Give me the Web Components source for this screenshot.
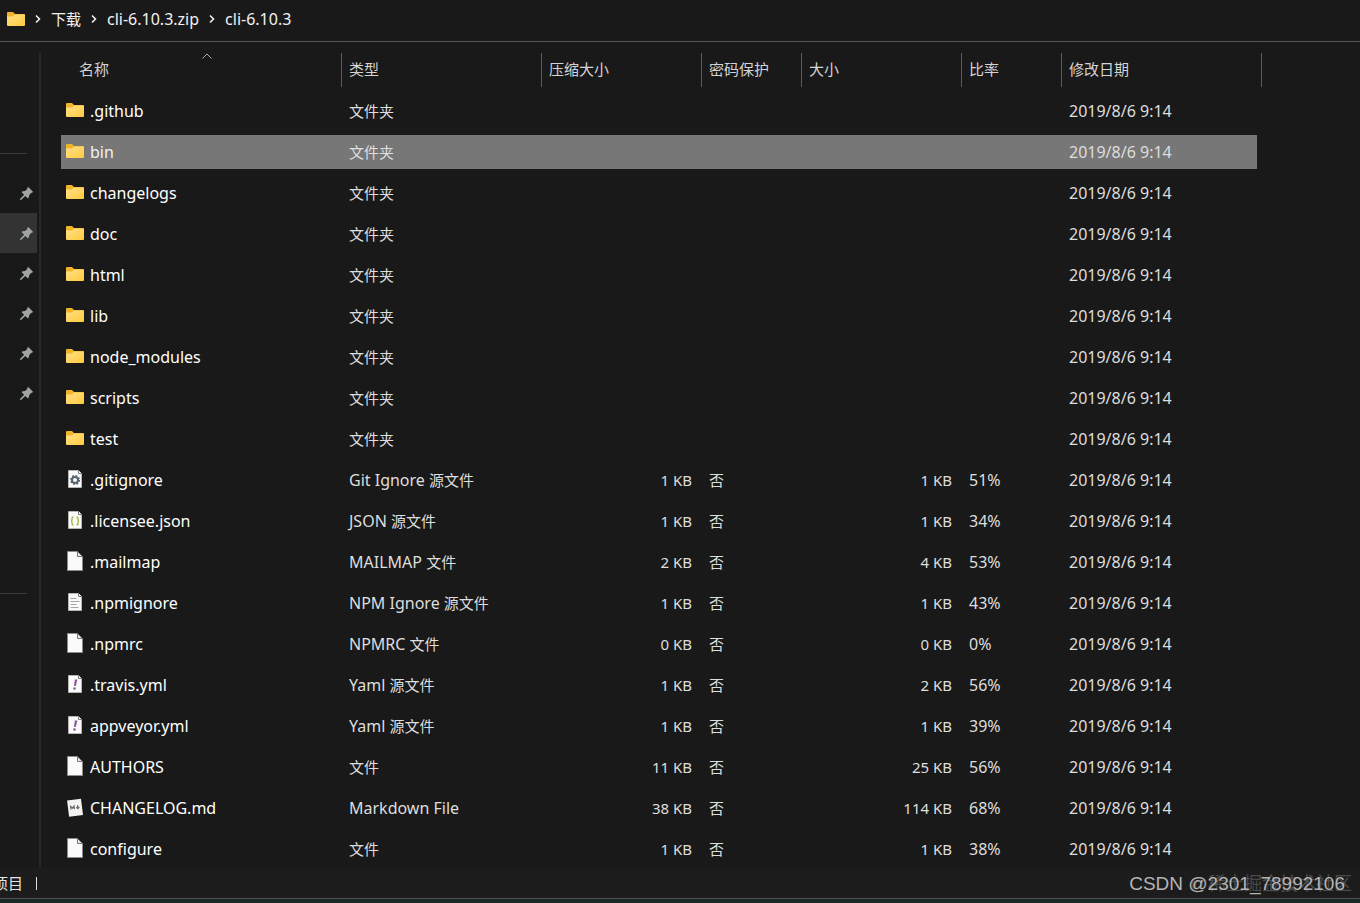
<!DOCTYPE html>
<html lang="zh-CN">
<head>
<meta charset="utf-8">
<title>cli-6.10.3</title>
<style>
  body {
    margin: 0;
    background-color: #191919;
    color: #dedede;
    font: 16px/22px "Noto Sans", "Noto Sans CJK SC", sans-serif;
  }
</style>
</head>
<body>
<explorer-window>
  <address-bar slot="top">
    <crumb-link>下载</crumb-link>
    <crumb-link latin>cli-6.10.3.zip</crumb-link>
    <crumb-link latin>cli-6.10.3</crumb-link>
  </address-bar>
  <quick-access slot="side">
    <pin-item></pin-item>
    <pin-item active></pin-item>
    <pin-item></pin-item>
    <pin-item></pin-item>
    <pin-item></pin-item>
    <pin-item></pin-item>
  </quick-access>
  <file-list selected="bin"></file-list>
  <status-bar slot="bottom">项目</status-bar>
  <water-mark slot="mark"></water-mark>
</explorer-window>

<script>
const folderSvg = `
<svg viewBox="0 0 18 14" width="18" height="14">
  <defs>
    <linearGradient id="g" x1="0" y1="0" x2="1" y2="1">
      <stop offset="0" stop-color="#ffe08a"/>
      <stop offset="1" stop-color="#ffcb3d"/>
    </linearGradient>
  </defs>
  <path d="M0 1Q0 0 1 0H6L8 2H17Q18 2 18 3V8H0Z" fill="#f0b429"/>
  <path d="M0 4.500H6L8 2.600H17.200Q18 2.600 18 3.400V13Q18 14 17 14H1Q0 14 0 13Z" fill="url(#g)"/>
</svg>`;

// small page with a folded corner, the editor icons are drawn on it
const page = (inner) => `
<svg viewBox="0 0 14 18" width="14" height="18">
  <path d="M.5 .5H10.500L13.500 3.500V17.500H.5Z" fill="#fafafa" stroke="#b5b5b5"/>
  <path d="M10.500 .5V3.500H13.500" fill="#fff" stroke="#777"/>
  ${inner}
</svg>`;

const icons = {
  folder: folderSvg,
  file: `
<svg viewBox="0 0 16 20" width="16" height="20">
  <path d="M.5 .5H10.500L15.500 5.500V19.500H.5Z" fill="#fafafa" stroke="#8c8c8c"/>
  <path d="M10.500 .5V5.500H15.500Z" fill="#e6e6e6" stroke="#777"/>
</svg>`,
  gear: page(`
  <circle cx="7" cy="10" r="3" fill="none" stroke="#59636b" stroke-width="2"/>
  <circle cx="7" cy="10" r="4.300" fill="none" stroke="#59636b" stroke-width="1.500" stroke-dasharray="1.700 1.677"/>`),
  json: page(`
  <path d="M5.500 6Q4 6 4 7.500V8.500Q4 10 3 10Q4 10 4 11.500V12.500Q4 14 5.500 14M8.500 6Q10 6 10 7.500V8.500Q10 10 11 10Q10 10 10 11.500V12.500Q10 14 8.500 14" fill="none" stroke="#a3b83f" stroke-width="1.400"/>`),
  text: page(`
  <path d="M2.500 5.500H8.500M2.500 8.500H11.500M2.500 11.500H8.500M2.500 14.500H10.500" stroke="#a4a4a4"/>`),
  yaml: page(`
  <path d="M6.800 4.500H9.400L7.800 11H6Z" fill="#8b5a9d"/>
  <circle cx="6.500" cy="13.500" r="1.300" fill="#8b5a9d"/>`),
  markdown: `
<svg viewBox="0 0 16 19" width="16" height="19">
  <g transform="rotate(-7 8 9.500)">
    <rect x="1" y="1.500" width="14" height="16.500" fill="#f2f2f2"/>
    <path d="M3.800 11V8L5.500 9.800L7.200 8V11M10.800 7.500V10.500M9.300 9.400L10.800 11L12.300 9.400" fill="none" stroke="#666" stroke-width="1.200"/>
  </g>
</svg>`
};

const columns = [
  { label: '名称', width: 281, sorted: true },
  { label: '类型', width: 200 },
  { label: '压缩大小', width: 160, right: true },
  { label: '密码保护', width: 100 },
  { label: '大小', width: 160, right: true },
  { label: '比率', width: 100 },
  { label: '修改日期', width: 200 }
];

const date = '2019/8/6 9:14';
const folders = ['.github', 'bin', 'changelogs', 'doc', 'html', 'lib', 'node_modules', 'scripts', 'test'];
const files = [
  ['gear', '.gitignore', 'Git Ignore 源文件', '1 KB', '1 KB', '51%'],
  ['json', '.licensee.json', 'JSON 源文件', '1 KB', '1 KB', '34%'],
  ['file', '.mailmap', 'MAILMAP 文件', '2 KB', '4 KB', '53%'],
  ['text', '.npmignore', 'NPM Ignore 源文件', '1 KB', '1 KB', '43%'],
  ['file', '.npmrc', 'NPMRC 文件', '0 KB', '0 KB', '0%'],
  ['yaml', '.travis.yml', 'Yaml 源文件', '1 KB', '2 KB', '56%'],
  ['yaml', 'appveyor.yml', 'Yaml 源文件', '1 KB', '1 KB', '39%'],
  ['file', 'AUTHORS', '文件', '11 KB', '25 KB', '56%'],
  ['markdown', 'CHANGELOG.md', 'Markdown File', '38 KB', '114 KB', '68%'],
  ['file', 'configure', '文件', '1 KB', '1 KB', '38%']
];

// Base class: puts the template of the element in its shadow root
class BaseElement extends HTMLElement {
  constructor() {
    super();
    this.attachShadow({ mode: 'open' });
  }

  connectedCallback() {
    let templ = document.createElement('template');
    templ.innerHTML = this.template();
    this.shadowRoot.replaceChildren(templ.content.cloneNode(true));
  }
}

customElements.define('explorer-window', class extends BaseElement {
  template() {
    return `
<style>
  :host {
    display: flex;
    flex-direction: column;
    height: 100vh;
    position: relative;
    overflow: hidden;
  }
  .middle {
    flex: 1;
    min-height: 0;
    display: flex;
  }
  main {
    flex: 1;
    min-width: 0;
    overflow: hidden;
  }
</style>
<slot name="top"></slot>
<div class="middle">
  <slot name="side"></slot>
  <main><slot></slot></main>
</div>
<slot name="bottom"></slot>
<slot name="mark"></slot>`;
  }
});

customElements.define('address-bar', class extends BaseElement {
  template() {
    return `
<style>
  :host { display: block; border-bottom: 1px solid #555; }
  nav {
    display: flex;
    align-items: center;
    height: 41px;
    padding: 0 7px;
    box-sizing: border-box;
    color: #f2f2f2;
  }
  file-icon { margin-bottom: 3px; }
</style>
<nav aria-label="路径"><file-icon type="folder"></file-icon><slot></slot></nav>`;
  }
});

customElements.define('crumb-link', class extends BaseElement {
  template() {
    return `
<style>
  :host { display: flex; align-items: center; font-size: 15px; padding-bottom: 4px; }
  :host([latin]) { font-size: 16px; }
  svg { width: 26px; height: 10px; }
  a { color: inherit; text-decoration: none; }
</style>
<svg viewBox="0 0 26 10"><path d="M11 1.500L14.500 5L11 8.500" fill="none" stroke="#eee" stroke-width="1.600"/></svg>
<a href="#"><slot></slot></a>`;
  }
});

customElements.define('quick-access', class extends BaseElement {
  template() {
    return `
<style>
  :host {
    display: block;
    flex: none;
    width: 41px;
    padding-top: 11px;
    box-sizing: border-box;
  }
  nav {
    height: 100%;
    padding-top: 100px;
    box-sizing: border-box;
    border-right: 2px solid #282828;
  }
  hr {
    width: 27px;
    height: 1px;
    margin: 0;
    border: 0;
    background-color: #3c3c3c;
  }
  .pins { margin: 19px 0 180px; }
</style>
<nav aria-label="快速访问"><hr><div class="pins"><slot></slot></div><hr></nav>`;
  }
});

customElements.define('pin-item', class extends BaseElement {
  template() {
    return `
<style>
  :host { display: block; }
  button {
    display: flex;
    align-items: center;
    justify-content: flex-end;
    width: 37px;
    height: 40px;
    padding: 0 4px 0 0;
    border: 0;
    background: none;
  }
  :host([active]) button { background-color: #333; }
</style>
<button aria-label="已固定">
  <svg viewBox="0 0 13 13" width="13" height="13">
    <path d="M8.200 0L13 4.800L12 6L11.200 5.800L9.200 8.200Q9.300 10.200 8 11.500L5.300 8.900L1 13L0 12.800L0 12L4.100 7.700L1.500 5Q3 3.800 5 4L7.300 1.900L7.200 1Z" fill="#9ea4a6"/>
  </svg>
</button>`;
  }
});

customElements.define('file-icon', class extends BaseElement {
  template() {
    return `
<style>
  :host {
    display: inline-flex;
    align-items: center;
    justify-content: center;
    flex: none;
    width: 18px;
    height: 20px;
  }
</style>
${icons[this.getAttribute('type')]}`;
  }
});

customElements.define('file-list', class extends BaseElement {
  // the Chinese glyphs are one size smaller than the latin ones
  cell(text) {
    return text.replace(/[\u4e00-\u9fff]+/g, '<span class="cjk">$&</span>');
  }

  head(col) {
    let arrow = col.sorted
      ? '<svg viewBox="0 0 10 6" width="10" height="6"><path d="M.5 5.500L5 1L9.500 5.500" fill="none" stroke="#aaa"/></svg>'
      : '';
    return `<th scope="col"${col.sorted ? ' aria-sort="ascending"' : ''}><button>${arrow}${col.label}</button></th>`;
  }

  row([icon, name, type, packed, locked, size, ratio]) {
    let cells = [type, packed, locked, size, ratio, date]
      .map((text, i) => `<td${columns[i + 1].right ? ' class="right"' : ''}>${this.cell(text)}</td>`)
      .join('');
    return `
<tr${name === this.getAttribute('selected') ? ' class="selected"' : ''}>
  <td><div class="name"><file-icon type="${icon}"></file-icon><span>${name}</span></div></td>
  ${cells}
</tr>`;
  }

  template() {
    let rows = [
      ...folders.map(name => ['folder', name, '文件夹', '', '', '', '']),
      ...files.map(([icon, name, type, packed, size, ratio]) => [icon, name, type, packed, '否', size, ratio])
    ];
    return `
<style>
  :host { display: block; padding: 4px 0 0 20px; }
  table {
    table-layout: fixed;
    width: 1201px;
    border-spacing: 0 7px;
  }
  th, td {
    height: 34px;
    padding: 0 10px 0 7px;
    box-sizing: border-box;
    text-align: left;
    font-weight: normal;
    white-space: nowrap;
  }
  th { border-right: 1px solid #5c5c5c; font-size: 15px; }
  th:first-child { padding: 0 7px 0 18px; }
  th button {
    position: relative;
    width: 100%;
    height: 34px;
    padding: 0 0 2px;
    border: 0;
    background: none;
    color: #d4d4d4;
    font: inherit;
    text-align: left;
  }
  th svg {
    position: absolute;
    top: 0;
    left: 50%;
    translate: -50%;
  }
  td:first-child { padding-left: 5px; color: #fff; }
  td:last-child { border-right: 5px solid transparent; background-clip: padding-box; }
  td.right { text-align: right; font-size: 15px; }
  .cjk { font-size: 15px; }
  .selected td { background-color: #777; }
  .selected td:first-child { color: #f2f2f2; }
  .name { display: flex; align-items: center; gap: 6px; }
  .name file-icon { margin-bottom: 2px; }
</style>
<table>
  <colgroup>${columns.map(col => `<col style="width: ${col.width}px">`).join('')}</colgroup>
  <thead><tr>${columns.map(col => this.head(col)).join('')}</tr></thead>
  <tbody>${rows.map(row => this.row(row)).join('')}</tbody>
</table>`;
  }
});

customElements.define('status-bar', class extends BaseElement {
  template() {
    return `
<style>
  :host {
    display: flex;
    align-items: center;
    gap: 13px;
    flex: none;
    height: 30px;
    border-bottom: 1px solid #4a4f4f;
    box-shadow: 0 4px #1b2828;
    margin-bottom: 4px;
    background-color: #1c1c1c;
    color: #e4e4e4;
    font-size: 15px;
  }
  .count {
    display: flex;
    justify-content: flex-end;
    width: 23px;
    overflow: hidden;
    white-space: nowrap;
  }
  .line { width: 1px; height: 13px; background-color: #ddd; }
</style>
<div class="count"><slot></slot></div>
<div class="line"></div>`;
  }
});

customElements.define('water-mark', class extends BaseElement {
  template() {
    return `
<style>
  :host {
    position: absolute;
    right: 8px;
    bottom: 8px;
    display: grid;
    justify-items: end;
    font: 18px/22px "Liberation Sans", "Noto Sans CJK SC", sans-serif;
    white-space: nowrap;
    pointer-events: none;
  }
  span { grid-area: 1 / 1; }
  .site { color: #4a4a4a; }
  .user { color: #b4b4b4; padding-right: 7px; font-size: 19px; }
</style>
<span class="site">@稀土掘金技术社区</span>
<span class="user">CSDN @2301_78992106</span>`;
  }
});
</script>
</body>
</html>
